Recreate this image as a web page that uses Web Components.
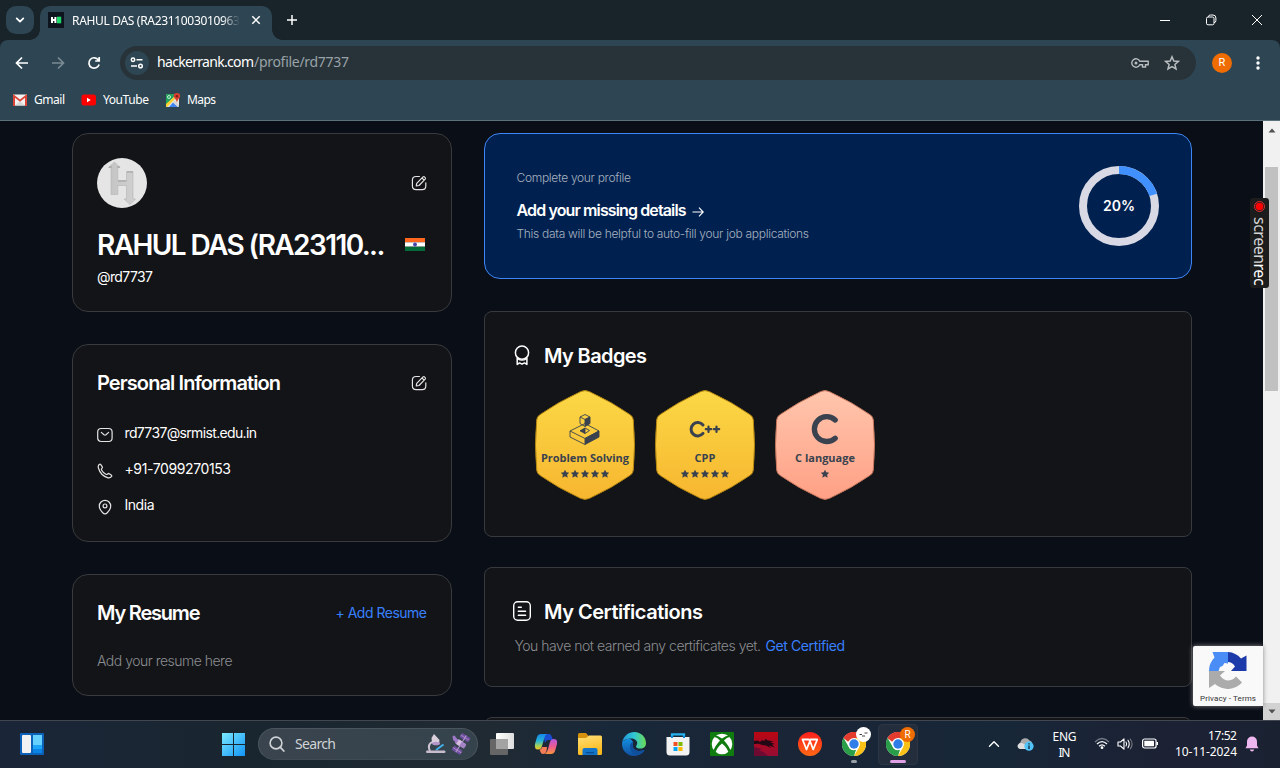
<!DOCTYPE html>
<html lang="en">
<head>
<meta charset="utf-8">
<title>RAHUL DAS (RA2311003010963)</title>
<style>
html,body{margin:0;height:768px;width:1280px;overflow:hidden;background:#0a0e17}
</style>
</head>
<body>
<desktop-screen></desktop-screen>
<script>
function define(name, css, html) {
  const t = document.createElement('template');
  t.innerHTML = `<style>*{box-sizing:border-box}:host{display:block;box-sizing:border-box}${css}</style>${html}`;
  customElements.define(name, class extends HTMLElement {
    constructor() {
      super();
      this.attachShadow({ mode: 'open' }).append(t.content.cloneNode(true));
    }
  });
}

/* Single line of text whose tracking is adjusted to a given width. */
customElements.define('fit-text', class extends HTMLElement {
  constructor() {
    super();
    this.attachShadow({ mode: 'open' }).innerHTML =
      '<style>:host{display:block;flex:none;white-space:nowrap}span{display:inline-block}</style><span><slot></slot></span>';
  }
  connectedCallback() {
    this.fit();
    addEventListener('load', () => this.fit());
  }
  fit() {
    const s = this.shadowRoot.querySelector('span'), w = +this.getAttribute('w');
    this.style.width = w + 'px';
    s.style.letterSpacing = '0px';
    const n = this.textContent.length, now = s.getBoundingClientRect().width;
    if (now && n > 1) s.style.letterSpacing = (w - now) / (n - 1) + 'px';
  }
});

const chromeLogo = `<circle cx="12" cy="12" r="12" fill="#fff"/><path d="M12 12 1.6 6A12 12 0 0 1 22.4 6Z" fill="#e33b2e"/><path d="M12 6H22.4A12 12 0 0 1 12 24L17.2 15Z" fill="#fbc116"/><path d="M1.6 6 6.8 15A6 6 0 0 0 14 17.8L12 24A12 12 0 0 1 1.6 6Z" fill="#2a9d48"/><path d="M1.6 6A12 12 0 0 1 22.4 6H12A6 6 0 0 0 6.3 10Z" fill="#e33b2e"/><circle cx="12" cy="12" r="6" fill="#fff"/><circle cx="12" cy="12" r="4.7" fill="#2f7de9"/>`;
const line = 'fill="none" stroke="currentColor" stroke-linecap="round" stroke-linejoin="round"';
/* name: [width, height, markup] */
const ICONS = {
  chevdown: [12, 12, `<path ${line} stroke-width="1.8" d="M2.7 4.4 6 7.6 9.3 4.4"/>`],
  hr: [16, 16, `<path fill="#0d141e" d="M0 0h16v16H0z"/><path fill="#fff" d="M3 5h2v2h1.4V5h2v6h-2V9H5v2H3z"/><path fill="#1eda6a" d="M9 4.700h4.200v6.600H9z"/>`],
  close: [10, 10, `<path stroke="currentColor" stroke-width="1.5" d="M1.300 1.300 8.700 8.700M8.700 1.300 1.300 8.700"/>`],
  plus: [12, 12, `<path stroke="currentColor" stroke-width="1.500" d="M6 1v10M1 6h10"/>`],
  min: [12, 12, `<path stroke="currentColor" d="M1 6.500h10"/>`],
  restore: [12, 12, `<path fill="none" stroke="currentColor" d="M3.500 3V2.500Q3.500 1 5.500 1H8Q10.900 1 10.900 4V6.500Q10.900 8.500 9 8.800"/><rect x="1.500" y="3" width="7.500" height="7.800" rx="1.500" fill="none" stroke="currentColor"/>`],
  winclose: [12, 12, `<path stroke="currentColor" d="M1 1 11 11M11 1 1 11"/>`],
  back: [14, 14, `<path fill="none" stroke="currentColor" stroke-width="1.700" d="M13 7H2M7 1.500 1.500 7 7 12.500"/>`],
  fwd: [14, 14, `<path fill="none" stroke="currentColor" stroke-width="1.700" d="M1 7H12M7 1.500 12.500 7 7 12.500"/>`],
  reload: [14, 14, `<path fill="none" stroke="currentColor" stroke-width="1.700" d="M11.400 4A5.200 5.200 0 1 0 12.100 8.500M12.200 1V5H8.200"/>`],
  tune: [14, 14, `<g fill="none" stroke="currentColor" stroke-width="1.500"><circle cx="3" cy="3.700" r="1.700"/><path d="M6.500 3.700H12.500M1 10H7"/><circle cx="10.500" cy="10" r="1.800"/></g>`],
  key: [18, 12, `<g fill="none" stroke="currentColor" stroke-width="1.400"><path d="M8.800 4.300A4.200 4.200 0 1 0 8.800 7.700H11.500V10H14.500V7.700H17.200V4.300Z"/></g><circle cx="5" cy="6" r="1.500" fill="currentColor"/>`],
  star: [16, 16, `<path fill="none" stroke="currentColor" stroke-width="1.500" d="M8 1.800 9.800 6 14.400 6.400 10.900 9.400 12 13.900 8 11.500 4 13.900 5.100 9.400 1.600 6.400 6.200 6Z"/>`],
  dots: [4, 16, `<g fill="currentColor"><circle cx="2" cy="3" r="1.700"/><circle cx="2" cy="8" r="1.700"/><circle cx="2" cy="13" r="1.700"/></g>`],
  gmail: [16, 12, `<path fill="#f2f2f2" d="M1 .500H15V11.500H1z"/><path fill="#d9dada" d="M3 11.500 8 7 13 11.500z"/><path fill="#dc4437" d="M1 0 8 5.500 15 0V12H13V3.800L8 7.800 3 3.800V12H1z"/>`],
  youtube: [16, 12, `<rect x=".500" y=".500" width="14.500" height="11" rx="2.500" fill="#f00"/><path fill="#fff" d="M6 3.700V8.300L9.800 6z"/>`],
  maps: [16, 16, `<rect x="1" y="2" width="13" height="13" rx="1.500" fill="#e8e6df"/><path fill="#22a45d" d="M1 3Q1 2 2 2H12L1 13z"/><path fill="#4285f4" d="M4 15 8 10.500 13 15z"/><path fill="#fdd231" d="M1 12 9 5 10 7 2 15H1z"/><path d="M8 10.500 10 9 14 13V14L13 15z" fill="#d5d5d5"/><circle cx="4" cy="5" r="1.500" fill="none" stroke="#d8f0e0" stroke-width=".900"/><path fill="#d8402f" d="M11.900 1A3.300 3.300 0 0 1 15.200 4.300C15.200 6 12.500 7.300 12 10.800 11.500 7.300 8.600 6 8.600 4.300A3.300 3.300 0 0 1 11.900 1"/><circle cx="11.900" cy="4.200" r="1.200" fill="#7d1f17"/>`],
  edit: [16, 16, `<g ${line} stroke-width="1.200"><path d="M8.400 1.500H5.200Q1.400 1.500 1.400 5V11Q1.400 14.600 5.200 14.600H11.200Q14.800 14.600 14.800 11V7.800"/><path d="M5.300 10.900 5.700 8.300 12 1.900Q12.900 1.200 13.800 2.100 15 3.200 14.200 4.200L8 10.500Z M11 3 13.200 5.200"/></g>`],
  mail: [16, 16, `<g ${line} stroke-width="1.200"><rect x=".700" y="1.500" width="14.400" height="13" rx="3.500"/><path d="M4.300 5.400 7 7.700Q8 8.400 9 7.700L11.600 5.400"/></g>`],
  phone: [16, 16, `<path ${line} stroke-width="1.200" d="M3.600 1.400 5 3.400Q5.900 4.700 4.700 5.600 4.100 6.200 4.700 7.200 6.200 9.900 8.900 11.300 9.900 11.800 10.500 11.100 11.400 10 12.600 10.900L14.300 12.100Q15.200 12.800 14.400 13.700 13.100 15.300 11 14.800 3.700 12.800 1.400 5 .800 2.900 2.200 1.500 3 .800 3.600 1.400Z"/>`],
  pin: [16, 16, `<g ${line} stroke-width="1.200"><path d="M8 14.900Q6.800 14.900 5.500 13.500 2.300 10.300 2.300 7A5.700 5.700 0 0 1 13.700 7Q13.700 10.300 10.500 13.500 9.200 14.900 8 14.900Z"/><circle cx="8" cy="6.900" r="1.900"/></g>`],
  badge: [18, 24, `<g ${line} stroke-width="1.500"><circle cx="9" cy="8.700" r="6.600"/><path d="M4.200 14V20.400L6.600 18.900 9 20.200 11.400 18.900 13.900 20.400V14"/><path d="M4.500 14.800Q9 17.700 13.600 14.800" stroke-width="1.100"/></g>`],
  cert: [18, 22, `<g ${line} stroke-width="1.400"><rect x=".700" y=".800" width="16.600" height="18.500" rx="4"/><path d="M5.300 6.200H8.300M5.300 10.200H12.600M5.300 14.200H12.600"/></g>`],
  arrow: [12, 12, `<path fill="none" stroke="currentColor" stroke-width="1.100" d="M.500 6H11M7 1.700 11.200 6 7 10.300"/>`],
  flag: [20, 13, `<path fill="#ff671f" d="M0 0h20v4.300H0z"/><path fill="#fff" d="M0 4.300h20v4.400H0z"/><path fill="#046a38" d="M0 8.700h20V13H0z"/><circle cx="10" cy="6.500" r="1.900" fill="#4743ad"/>`],
  avatar: [50, 50, `<defs><linearGradient id="a"><stop stop-color="#c4c4c4"/><stop offset="1" stop-color="#d0d0d0"/></linearGradient></defs><circle cx="25" cy="25" r="25" fill="#e5e5e5"/><path fill="url(#a)" stroke="#b4b4b4" stroke-width=".600" d="M17.500 4 23 9.500H20.800V22.500H29.500V13.500H36V41H38.500L33 46.500 27 41H29.500V27.500H20.800V36.500H14V9.500H11.500Z"/><path stroke="#a0a0a0" d="M30 14H36M21 23H29.500M12 9H15M20 9H23"/>`],
  problem: [36, 36, `<g stroke="#39424e" stroke-width=".900" fill="none"><path d="M3 20 18 12.500 32 20 18 27.500ZM3 20V26L18 33.500"/><path fill="#39424e" d="M18 27.500 32 20V26L18 33.500ZM18 8.500 23 6V12.500L18 15.500Z"/><path d="M13 6 18 3.500 23 6 18 8.500ZM13 6V12.500L18 15.500"/><path fill="#39424e" d="M18 17V22.500L13 19.800Z"/><path d="M18 17 22.500 19.500 18 22.500"/></g>`],
  cpp: [36, 36, `<g ${line} stroke="#39424e" style="color:#39424e"><path stroke-width="3" d="M16 14A6.700 6.700 0 1 0 16 22.400"/><path stroke-width="2.200" d="M21.500 15.500V20.900M18.800 18.200H24.200M29.500 15.500V20.900M26.800 18.200H32.200"/></g>`],
  clang: [36, 36, `<path fill="none" stroke="#39424e" stroke-width="5.300" stroke-linecap="round" d="M28.200 9A12.400 12.400 0 1 0 28.200 27.200"/>`],
  bstar: [10, 10, `<path fill="#39424e" d="M5 .8 6.300 3.300 9.200 3.700 7.100 5.700 7.700 8.800 5 7.300 2.300 8.800 2.900 5.700 .8 3.700 3.700 3.300z"/>`],
  captcha: [40, 40, `<path fill="#4a8df6" d="M1 20A19 19 0 0 1 6.500 6.500L4.500 1H20V12.500L16.500 12 14.500 15 12 16 10.500 20Z"/><path fill="#1c3aa9" d="M20 1A19 19 0 0 1 33 7.500L38.500 4.500V20H23L27 15.500Q24.500 11 20 11Z"/><path fill="#ababab" d="M1 20H17L12 24.500Q15.500 29.500 20.500 29.500 25.500 29 28 25.500L34 31.500A19 19 0 0 1 7 33L1 37Z"/>`],
  widgets: [24, 22, `<rect width="24" height="22" rx="1" fill="#0b62b8"/><rect x="2" y="2" width="9" height="18" rx="1" fill="#f3f3f3"/><path fill="#66d0ff" d="M13 2h9v10h-9z"/><path fill="#1ca5f9" d="M13 12h9v4h-9z"/><path fill="#0a84e6" d="M13 16h9v4h-9z"/>`],
  win: [24, 24, `<defs><linearGradient id="w" x2="1" y2="1"><stop stop-color="#7beaff"/><stop offset="1" stop-color="#1193f5"/></linearGradient></defs><path fill="url(#w)" d="M1 1h11v11H1zM13 1h11v11H13zM1 13h11v11H1zM13 13h11v11H13z"/>`],
  search: [16, 16, `<circle cx="7" cy="7" r="5.900" fill="none" stroke="currentColor" stroke-width="1.600"/><path stroke="currentColor" stroke-width="1.800" stroke-linecap="round" d="M11.200 11.200 14.800 15"/>`],
  scope: [20, 22, `<path fill="none" stroke="#d0c4d2" stroke-width="2" d="M6 9Q1 12 4 18"/><path fill="#dccfdc" d="M5.500 5 8 1 13.500 7 13 11 6 10z"/><ellipse cx="10" cy="10.500" rx="4" ry="1.800" fill="#b596c9"/><path stroke="#42b2ee" stroke-width="1.800" d="M10 17 17.500 11.500"/><rect y="17.500" width="19.500" height="2.600" rx="1.300" fill="#c9bccd"/>`],
  sat: [22, 22, `<g transform="rotate(32 11 11) translate(0 1) scale(1 .900)"><path fill="#6f4fa0" d="M6 0h10v5.500H6zM6 16.500h10V22H6z"/><path fill="#b79acd" d="M10.500 0h1v22h-1zM6 2.500h10v.7H6zM6 18.900h10v.7H6z"/><rect x="5" y="8" width="11" height="6" rx="1.500" fill="#a584c6"/><path fill="#d7bde2" d="M7 8h3.500v6H7z"/></g><path fill="#9d78c6" d="M2.500 3 4.500 2.500 8 7 6 9.500 3 7z"/>`],
  taskview: [24, 22, `<defs><linearGradient id="t" x2="1"><stop stop-color="#fff"/><stop offset="1" stop-color="#ddd"/></linearGradient></defs><rect x="6" width="18" height="16" rx="1" fill="url(#t)"/><rect y="6" width="18" height="16" rx="1" fill="#666"/><path fill="#a3a3a3" d="M6 6h12v10H6z"/>`],
  copilot: [24, 24, `<defs><linearGradient id="c1" y2="1" x2="0"><stop stop-color="#1785e8"/><stop offset=".450" stop-color="#25b4d8"/><stop offset=".750" stop-color="#9ed05d"/><stop offset="1" stop-color="#f5c51b"/></linearGradient><linearGradient id="c2" y2="1" x2="0"><stop stop-color="#b657df"/><stop offset=".500" stop-color="#ed5b92"/><stop offset="1" stop-color="#f9943b"/></linearGradient></defs><path fill="#194cd0" d="M9 2H15Q17 2 17.500 4L19 8H14Q12 8 11 11z"/><path fill="url(#c1)" d="M13 2Q11 3 10 7L8 14Q7 17.500 4 17.500 0 17.500 1 12L3 5Q4 2 7 2z"/><path fill="url(#c2)" d="M11 22Q13 21 14 17L16 10Q17 7 19.500 7 24 7 23 12L21 19Q20 22 17 22z"/><path fill="#f47c56" d="M8 15H13L12.500 19Q12 22 9 22 7 22 6.500 20L5.500 17.500Q7.500 17.500 8 15z"/>`],
  folder: [24, 22, `<defs><linearGradient id="f" x2=".300" y2="1"><stop stop-color="#ffe07a"/><stop offset="1" stop-color="#fbb91c"/></linearGradient></defs><path fill="#d7920d" d="M0 1.500Q0 0 1.500 0H8L10.500 3V10H0z"/><path fill="url(#f)" d="M0 5H8L11 2.500H22.500Q24 2.500 24 4V20.500Q24 22 22.500 22H1.500Q0 22 0 20.500z"/><path fill="#1275c9" d="M4.500 22V17Q4.500 15 6.500 15H17.500Q19.500 15 19.500 17V22z"/><path fill="#0a4e92" d="M8 19H16V20.300H8z"/>`],
  edge: [24, 24, `<defs><linearGradient id="e" x2="1"><stop stop-color="#2195dc"/><stop offset=".500" stop-color="#30c7d4"/><stop offset="1" stop-color="#6bdc54"/></linearGradient><linearGradient id="e2" y2="1" x2="0"><stop stop-color="#138ee0"/><stop offset="1" stop-color="#114f9f"/></linearGradient></defs><path fill="url(#e2)" d="M.3 9.500Q0 11 0 12A12 12 0 0 0 12 24Q18.500 24 22.300 18.600 22.600 17.700 21.700 18 17 20.300 13 17.800 9.200 14.800 11.200 10.300 9 6 5 7Z"/><path fill="url(#e)" d="M.300 10C1.500 4 6.500 0 12.300 0 19 0 24 5 24 11.200 24 14.500 21.500 16.500 18.500 16.500 15.500 16.500 14 15.300 14 14.400 14 13.700 15.200 13.200 15.200 11 15.200 8.500 12.500 6.500 9 6.500 5 6.500 1.500 8 .300 10Z"/><path fill="#0f4f9e" d="M11 9.500Q7.500 11.500 8 15.500 9 21.500 15 23.600 20 22.500 22.300 18.600 22.600 17.700 21.700 18 17 20.300 13 17.800 9.500 15 11 9.500Z"/>`],
  store: [24, 24, `<path fill="none" stroke="#27b1ef" stroke-width="2.300" d="M6 7V2.300H18V7"/><path fill="#f2f2f2" d="M.500 5H23.500V20Q23.500 23.500 20 23.500H4Q.500 23.500 .500 20z"/><path fill="none" stroke="#1289d8" stroke-width="2" d="M6 4V6M18 4V6"/><path fill="#f25022" d="M7.500 10h4v4h-4z"/><path fill="#7fba00" d="M12.500 10h4v4h-4z"/><path fill="#00a4ef" d="M7.500 15h4v4h-4z"/><path fill="#ffb900" d="M12.500 15h4v4h-4z"/>`],
  xbox: [24, 24, `<rect width="24" height="24" rx="1" fill="#107c10"/><circle cx="12" cy="12" r="10.300" fill="#fff"/><path fill="#107c10" d="M5 3.500Q8 3.500 12 6.500 16 3.500 19 3.500L20 5Q17 4.800 14 8.500 19 14 20.500 18.500L18.500 20.500Q17 15.500 12 11.500 7 15.500 5.500 20.500L3.500 18.500Q5 14 10 8.500 7 4.800 4 5z"/>`],
  dragon: [24, 24, `<defs><linearGradient id="d" x2="0" y2="1"><stop stop-color="#ba0712"/><stop offset="1" stop-color="#960c34"/></linearGradient></defs><path fill="url(#d)" d="M0 0h24v24H0z"/><path fill="#220814" d="M0 9 4 8.500 6 10 8 8 10 9 12 6.800 13 8.300 20 9.500 16 10 20.500 12 18 12.500 20.500 15.500 15 13.500 17 16 12 13.500 8 13 5 11.800 0 12z"/><path fill="#6d0a31" d="M0 15 8 17 5 18 11 21 14 24H0z"/>`],
  wps: [24, 24, `<defs><linearGradient id="p" x2="0" y2="1"><stop stop-color="#ff1f1d"/><stop offset="1" stop-color="#ff6814"/></linearGradient></defs><circle cx="12" cy="12" r="12" fill="url(#p)"/><path fill="none" stroke="#fff" stroke-width="1.800" stroke-linejoin="round" d="M7 7.500H4.500L8.500 17.500 12 9 15.200 17.500 19.300 7.500H12.500L11.500 9.500M7 7.500H11L12 9"/>`],
  chrome: [24, 24, chromeLogo],
  up: [12, 8, `<path ${line} stroke-width="1.400" d="M1.500 6.200 6 1.700 10.500 6.200"/>`],
  cloud: [18, 14, `<path fill="#a9a9ab" d="M4.500 12A4 4 0 0 1 3.500 5 5 5 0 0 1 12.500 3.500Q15 4 15 6L10 12z"/><path fill="#ddd" d="M3 12Q0 11 .700 8 2 5.500 5 6L11 9 9 12z"/><circle cx="12" cy="9.200" r="4.600" fill="#50c3f7"/><path stroke="#123" stroke-width="1.300" d="M12 8.500V12M12 6.200V7.500"/>`],
  wifi: [16, 13, `<g fill="none" stroke="currentColor" stroke-width="1.300"><path opacity=".400" d="M1 5Q8-2 15 5"/><path d="M3 7Q8 2.200 13 7M5.100 9.300Q8 6.500 10.900 9.300"/></g><circle cx="8" cy="10.700" r="1.400" fill="currentColor"/>`],
  sound: [16, 14, `<g ${line} stroke-width="1.100"><path d="M1 5V9H3.500L7 12.200V1.800L3.500 5z"/><path d="M9 5Q10.300 7 9 9M11 3.300Q13.500 7 11 10.700"/><path opacity=".400" d="M13.200 2Q17 7 13.200 12"/></g>`],
  battery: [16, 11, `<rect x=".600" y="1" width="13.500" height="9" rx="2" fill="none" stroke="currentColor" stroke-width="1.200"/><rect x="2.300" y="2.700" width="9.700" height="5.600" rx=".500" fill="currentColor"/><path fill="currentColor" d="M14.500 4H16V7h-1.500z"/>`],
  bell: [14, 16, `<path fill="#efb7ef" d="M7 .500A5 5 0 0 1 12 5.500V9.500L13.500 12.300H.500L2 9.500V5.500A5 5 0 0 1 7 .500M4.800 13.500H9.200Q8.700 15.500 7 15.500 5.300 15.500 4.800 13.500"/>`],
  triup: [8, 5, `<path fill="currentColor" d="M4 .500 7.500 4.500H.500z"/>`],
  tridown: [8, 5, `<path fill="currentColor" d="M4 4.500 7.500.500H.500z"/>`]
};
customElements.define('ui-icon', class extends HTMLElement {
  connectedCallback() {
    if (this.shadowRoot) return;
    const [w, h, m] = ICONS[this.getAttribute('name')];
    this.attachShadow({ mode: 'open' }).innerHTML =
      `<style>:host{display:block;flex:none;width:${w}px;height:${h}px}svg{display:block}</style><svg width="${w}" height="${h}" viewBox="0 0 ${w} ${h}">${m}</svg>`;
  }
});

define('tab-strip', `
:host{height:40px;display:flex;background:#18242a;padding:6px 0 0 6px;color:#fff;font:12px "Noto Sans","Open Sans",sans-serif}
.menu{width:28px;height:28px;border-radius:10px;background:#2e4653;display:grid;place-items:center;margin-right:6px}
.tab{position:relative;width:232px;height:34px;border-radius:10px 10px 0 0;background:#2e4653;display:flex;align-items:center;padding:0 11px 6px 8px}
.tab::before,.tab::after{content:"";position:absolute;bottom:0;width:10px;height:10px;background:radial-gradient(circle at 0 0,transparent 9.500px,#2e4653 10px)}
.tab::before{left:-10px}.tab::after{right:-10px;transform:scaleX(-1)}
.title{width:168px;margin:0 11px 0 8px;overflow:hidden;-webkit-mask:linear-gradient(90deg,#000 150px,transparent 168px);mask:linear-gradient(90deg,#000 150px,transparent 168px)}
.new{margin:8px 0 0 14px}
.win{margin:8px 17px 0 auto;display:flex;gap:34px}`,
`<div class="menu"><ui-icon name="chevdown"></ui-icon></div>
<div class="tab"><ui-icon name="hr"></ui-icon><div class="title"><fit-text w="168">RAHUL DAS (RA2311003010963</fit-text></div><ui-icon name="close"></ui-icon></div>
<ui-icon class="new" name="plus"></ui-icon>
<div class="win"><ui-icon name="min"></ui-icon><ui-icon name="restore"></ui-icon><ui-icon name="winclose"></ui-icon></div>`);

define('tool-bar', `
:host{height:46px;padding:6px 20px 6px 15px;background:#2e4653;border-radius:8px 8px 0 0;display:flex;align-items:center;color:#fff;font:14px/18px "Noto Sans","Open Sans",sans-serif}
.nav{display:flex;gap:22px;margin-right:19px}.dim{color:#7b8b94}
.omni{width:1076px;height:34px;border-radius:17px;background:#283339;display:flex;align-items:center;padding:0 16px 0 5px}
.site{width:24px;height:24px;border-radius:50%;background:#2e4653;display:grid;place-items:center;margin-right:8px}
.omni fit-text{margin-bottom:2px}
.path{color:#99a2a7}.end{margin-left:auto;display:flex;gap:15px;align-items:center;color:#b7bdc0}
.me{width:20px;height:20px;border-radius:50%;background:#ee6c02;margin:0 24px 0 16px;font:11px/20px Roboto,sans-serif;text-align:center}`,
`<div class="nav"><ui-icon name="back"></ui-icon><ui-icon class="dim" name="fwd"></ui-icon><ui-icon name="reload"></ui-icon></div>
<div class="omni"><div class="site"><ui-icon name="tune"></ui-icon></div><fit-text w="97">hackerrank.com</fit-text><fit-text class="path" w="95">/profile/rd7737</fit-text>
<div class="end"><ui-icon name="key"></ui-icon><ui-icon name="star"></ui-icon></div></div>
<div class="me">R</div><ui-icon name="dots"></ui-icon>`);

define('bookmarks-bar', `
:host{height:35px;padding:0 12px 6px;background:#2e4653;border-bottom:1px solid #5b717c;display:flex;align-items:center;color:#fff;font:12px/16px "Noto Sans","Open Sans",sans-serif}
div{display:flex;align-items:center;gap:6px;margin-right:16px}`,
`<div><ui-icon name="gmail"></ui-icon><fit-text w="31">Gmail</fit-text></div><div><ui-icon name="youtube"></ui-icon><fit-text w="46">YouTube</fit-text></div><div><ui-icon name="maps"></ui-icon><fit-text w="29">Maps</fit-text></div>`);

define('profile-card', `
:host{background:#131417;border:1px solid #393a3d;border-radius:16px;padding:24px;color:#fff}
:host([wide]){border-radius:8px;padding:30px 28px}`, `<slot></slot>`);

define('card-title', `:host{height:28px;display:flex;align-items:center;font:600 20px/28px Inter,sans-serif;color:#fff}::slotted([end]){margin-left:auto}`, `<slot></slot>`);

define('info-row', `:host{height:36px;display:flex;align-items:center;gap:11.500px;font:14px/20px Inter,sans-serif}::slotted(ui-icon){margin-top:4px;color:#e4e4e4}`, `<slot></slot>`);

define('side-column', `
:host{width:380px;display:grid;grid-template-rows:179px 198px 122px;row-gap:32px}
.top{height:50px;display:flex;align-items:center;justify-content:space-between}
.name{display:flex;align-items:center;justify-content:space-between;height:36px;margin-top:19px;padding-right:2px;font:600 28px/36px Inter,sans-serif}
.name ui-icon{margin-bottom:2px}
.handle{font:14px/20px Inter,sans-serif;margin-top:4px}
.list{margin-top:18px}
.link{font:14px/20px Inter,sans-serif;color:#3880ff}
.muted{font:300 14px/20px Inter,sans-serif;color:#8b8d92;margin-top:24px}
ui-icon[name=edit]{color:#e4e4e4}`,
`<profile-card><div class="top"><ui-icon name="avatar"></ui-icon><ui-icon name="edit"></ui-icon></div>
<div class="name"><fit-text w="288">RAHUL DAS (RA23110...</fit-text><ui-icon name="flag"></ui-icon></div><fit-text class="handle" w="56">@rd7737</fit-text></profile-card>
<profile-card><card-title><fit-text w="184">Personal Information</fit-text><ui-icon end name="edit"></ui-icon></card-title>
<div class="list"><info-row><ui-icon name="mail"></ui-icon><fit-text w="132.500">rd7737@srmist.edu.in</fit-text></info-row>
<info-row><ui-icon name="phone"></ui-icon><fit-text w="106.500">+91-7099270153</fit-text></info-row>
<info-row><ui-icon name="pin"></ui-icon><fit-text w="30">India</fit-text></info-row></div></profile-card>
<profile-card><card-title><fit-text w="103.500">My Resume</fit-text><fit-text end class="link" w="91.500">+ Add Resume</fit-text></card-title><fit-text class="muted" w="135.500">Add your resume here</fit-text></profile-card>`);

define('promo-card', `
:host{background:#002150;border:1px solid #3f86f4;border-radius:16px;padding:0 32px 0 31.500px;display:flex;align-items:center;justify-content:space-between;color:#fff;font:300 12px/16px Inter,sans-serif}
.s{color:#a9b1bf}.h{display:flex;align-items:center;gap:5.500px;height:22px;margin:13px 0 5px;font:600 16px/22px Inter,sans-serif}
.h ui-icon{margin-top:3px}
.ring{width:80px;height:80px;display:grid}.ring>*{grid-area:1/1}.ring fit-text{place-self:center;font:600 14px/20px Inter,sans-serif}`,
`<div><fit-text class="s" w="114.500">Complete your profile</fit-text><div class="h"><fit-text w="170">Add your missing details</fit-text><ui-icon name="arrow"></ui-icon></div><fit-text class="s" w="292.500">This data will be helpful to auto-fill your job applications</fit-text></div>
<div class="ring"><svg width="80" height="80"><circle cx="40" cy="40" r="36" fill="none" stroke="#d8d9e5" stroke-width="8"/><path d="M40 4A36 36 0 0 1 74.240 28.880" fill="none" stroke="#4190ff" stroke-width="8"/></svg><fit-text w="32">20%</fit-text></div>`);

customElements.define('hex-badge', class extends HTMLElement {
  connectedCallback() {
    if (this.shadowRoot) return;
    const g = k => this.getAttribute(k), gold = g('tone') === 'gold';
    const [c1, c2, c3] = gold ? ['#fbd846', '#f7b62f', '#b38611'] : ['#ffc6ad', '#ffa085', '#c4755b'];
    this.attachShadow({ mode: 'open' }).innerHTML = `<style>:host{display:grid;width:100px;height:110px}:host>*{grid-area:1/1}
.in{display:flex;flex-direction:column;align-items:center;padding-top:21px;font:700 11px/16px "Open Sans",sans-serif;color:#39424e}
fit-text{margin-top:3px}.st{display:flex;margin-top:3px}</style>
<svg width="100" height="110"><defs><linearGradient id="g" x2="0" y2="1"><stop stop-color="${c1}"/><stop offset="1" stop-color="${c2}"/></linearGradient></defs>
<path fill="url(#g)" stroke="${c3}" d="M45.500 1.700Q50-.500 54.500 1.700 77 12 95.500 25 98 26.800 98.300 30 100.700 55 98.300 80 98 83.200 95.500 85 77 98 54.500 108.300 50 110.500 45.500 108.300 23 98 4.500 85 2 83.200 1.700 80-.700 55 1.700 30 2 26.800 4.500 25 23 12 45.500 1.700Z"/></svg>
<div class="in"><ui-icon name="${g('icon')}"></ui-icon><fit-text w="${g('w')}">${g('label')}</fit-text><div class="st">${'<ui-icon name="bstar"></ui-icon>'.repeat(+g('stars'))}</div></div>`;
  }
});

define('main-column', `
:host{width:708px;display:grid;grid-template-rows:146px 226px 120px 120px;row-gap:30px}
.badges{height:226px;margin-top:2px}.certs{height:120px;margin-top:2px}.next{margin-top:2px}
ui-icon{margin-right:13px}ui-icon[name=cert]{margin-left:-.500px;margin-right:13.500px}
.b{display:flex;gap:20px;margin:20px 0 0 22px}
.t{display:flex;gap:4.500px;margin:10px 0 0 1.500px;font:300 14px/20px Inter,sans-serif;color:#8b8d92}
.l{color:#3880ff;font-weight:400}`,
`<promo-card></promo-card>
<profile-card wide class="badges"><card-title><ui-icon name="badge"></ui-icon><fit-text w="103">My Badges</fit-text></card-title>
<div class="b"><hex-badge tone="gold" icon="problem" label="Problem Solving" w="88" stars="5"></hex-badge><hex-badge tone="gold" icon="cpp" label="CPP" w="21" stars="5"></hex-badge><hex-badge tone="bronze" icon="clang" label="C language" w="60" stars="1"></hex-badge></div></profile-card>
<profile-card wide class="certs"><card-title><ui-icon name="cert"></ui-icon><fit-text w="159">My Certifications</fit-text></card-title>
<div class="t"><fit-text w="246.500">You have not earned any certificates yet.</fit-text><fit-text class="l" w="79.500">Get Certified</fit-text></div></profile-card>
<profile-card wide class="next"></profile-card>`);

define('scroll-bar', `
:host{width:17px;background:#f1f1f1;display:flex;flex-direction:column;align-items:center;color:#505050}
.u{height:46px;padding-top:7px}.thumb{width:13px;height:224px;background:#c1c1c1}
.d{margin-top:auto;width:17px;height:17px;background:#d2d2d2;display:grid;place-items:center}`,
`<div class="u"><ui-icon name="triup"></ui-icon></div><div class="thumb"></div><div class="d"><ui-icon name="tridown"></ui-icon></div>`);

define('captcha-badge', `
:host{position:absolute;right:17px;bottom:14px;width:70px;height:60px;background:#f9f9f9;border-radius:2px 0 0 2px;box-shadow:0 0 5px #888;padding-top:5px}
ui-icon{margin:0 auto}fit-text{margin:3px auto 0;font:8px/10px Roboto,sans-serif;color:#333}`,
`<ui-icon name="captcha"></ui-icon><fit-text w="56">Privacy - Terms</fit-text>`);

define('screenrec-tab', `
:host{position:absolute;left:1250px;top:77px;width:19px;height:90px;border-radius:3px;background:#1c1c1c;display:flex;flex-direction:column;align-items:center;padding-top:3px}
span{writing-mode:vertical-rl;font:16px/19px "Noto Sans",sans-serif;color:#d6d6d6;margin-top:5px;letter-spacing:-.500px}b{font-weight:400;color:#fff}`,
`<svg width="11" height="11"><circle cx="5.500" cy="5.500" r="5" fill="none" stroke="#d33"/><circle cx="5.500" cy="5.500" r="3.800" fill="#f00"/></svg><span>screen<b>rec</b></span>`);

define('page-view', `
:host{position:relative;height:599px;overflow:hidden;display:flex;background:#0a0e17}
.c{flex:1;display:flex;gap:32px;align-items:flex-start;padding:12px 0 0 72px}`,
`<div class="c"><side-column></side-column><main-column></main-column></div><scroll-bar></scroll-bar><captcha-badge></captcha-badge><screenrec-tab></screenrec-tab>`);

define('app-slot', `
:host{width:44px;height:47px;display:grid;place-items:center;position:relative}
:host([active])::before{content:"";position:absolute;inset:4px 2px 2px;border-radius:4px;background:#232d3c;border:1px solid #2b3543}
:host([active])::after,:host([run])::after{content:"";position:absolute;bottom:4px;left:50%;width:6px;height:3px;margin-left:-3px;border-radius:2px;background:#99a0a8}
:host([active])::after{width:16px;margin-left:-8px;background:#dfa0e6}
::slotted(ui-icon){position:relative}::slotted(.dot){position:absolute;left:24px;top:7px;width:15px;height:15px;border-radius:50%;font:10px/15px Roboto,sans-serif;text-align:center}`,
`<slot></slot>`);

define('task-bar', `
:host{height:48px;border-top:1px solid #42474f;padding-bottom:2px;background:linear-gradient(90deg,#1a2638 0,#19262f 20%,#202a33 38%,#182839 48%,#1a2536 60%,#172738 78%,#1c2133 92%,#1a2232);display:flex;align-items:center;color:#fff;font:12px/16px "Noto Sans","Open Sans",sans-serif}
.w{margin-left:20px}.s{margin-left:177px}
.f{width:220px;height:32px;border-radius:16px;background:linear-gradient(90deg,#3a444e,#34434c);border:1px solid #4a555e;border-bottom-color:#3f4a53;margin:0 2px 0 13px;display:flex;align-items:center;padding:0 5px 0 10px;font-size:14px;color:#d0d3d6}
.f fit-text{margin-left:10px}.f .x{margin-left:auto}.f .y{margin-left:4px}
.tray{margin-left:auto;display:flex;align-items:center;padding-right:21px}
.r,.m{display:grid;justify-items:end}.m{justify-items:center;margin:2px -.500px 0 17.500px}
.dot.o{background:#ee6c02}.dot.p{background:#fff}`,
`<ui-icon class="w" name="widgets"></ui-icon><ui-icon class="s" name="win"></ui-icon>
<div class="f"><ui-icon name="search"></ui-icon><fit-text w="41">Search</fit-text><ui-icon class="x" name="scope"></ui-icon><ui-icon class="y" name="sat"></ui-icon></div>
<app-slot><ui-icon name="taskview"></ui-icon></app-slot><app-slot><ui-icon name="copilot"></ui-icon></app-slot><app-slot><ui-icon name="folder"></ui-icon></app-slot><app-slot><ui-icon name="edge"></ui-icon></app-slot><app-slot><ui-icon name="store"></ui-icon></app-slot><app-slot><ui-icon name="xbox"></ui-icon></app-slot><app-slot><ui-icon name="dragon"></ui-icon></app-slot><app-slot><ui-icon name="wps"></ui-icon></app-slot>
<app-slot run><ui-icon name="chrome"></ui-icon><div class="dot p"><svg width="15" height="15"><path d="M3.500 7.500H6M8.500 6H11.500M6 9H9" stroke="#444" fill="none"/></svg></div></app-slot>
<app-slot active><ui-icon name="chrome"></ui-icon><div class="dot o">R</div></app-slot>
<div class="tray"><ui-icon name="up"></ui-icon><ui-icon name="cloud" style="margin-left:17px"></ui-icon>
<div class="m"><fit-text w="24">ENG</fit-text><fit-text w="12">IN</fit-text></div>
<ui-icon name="wifi" style="margin-left:18px"></ui-icon><ui-icon name="sound" style="margin-left:7px"></ui-icon><ui-icon name="battery" style="margin-left:9px"></ui-icon>
<div class="r" style="margin:0 8px 0 17px"><fit-text w="29">17:52</fit-text><fit-text w="62">10-11-2024</fit-text></div><ui-icon name="bell"></ui-icon></div>`);

define('desktop-screen', `:host{width:1280px;height:768px;background:#18242a;overflow:hidden}`,
`<tab-strip></tab-strip><tool-bar></tool-bar><bookmarks-bar></bookmarks-bar><page-view></page-view><task-bar></task-bar>`);
</script>
</body>
</html>
